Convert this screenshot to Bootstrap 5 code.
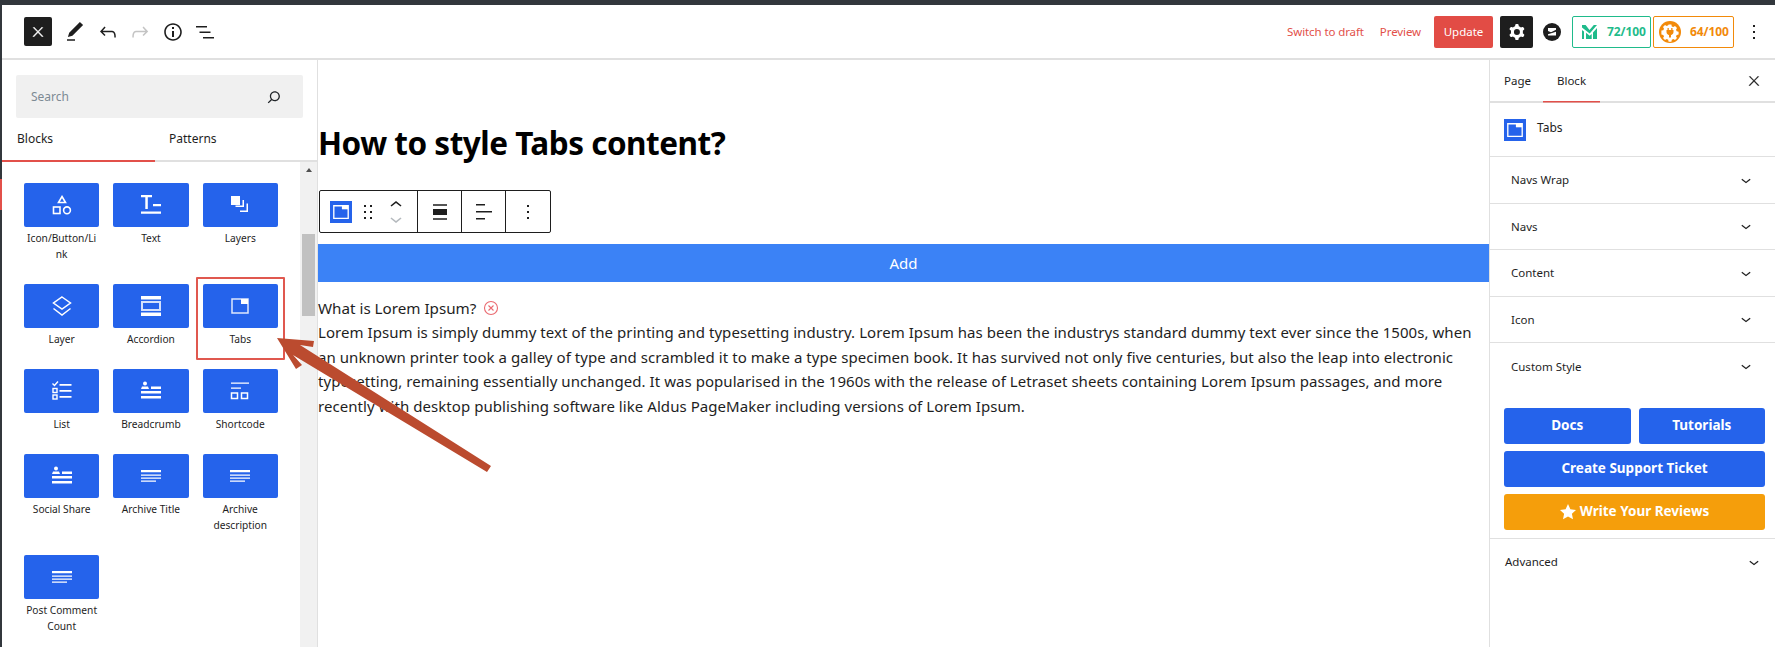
<!doctype html>
<html lang="en">

<head>
	<meta charset="utf-8">
	<meta name="viewport" content="width=device-width, initial-scale=1">
	<title>How to style Tabs content?</title>
	<link href="https://cdn.jsdelivr.net/npm/bootstrap@5.3.5/dist/css/bootstrap.min.css" rel="stylesheet"
		crossorigin="anonymous">
	<style>
		html, body { height: 647px; overflow: hidden; }
		body { font-family: "Noto Sans", "Liberation Sans", sans-serif; font-size: 13px; color: #1e1e1e; background: #fff; }
		svg { fill: currentColor; display: block; flex: none; }
		.admin-bar { height: 5px; background: #32373c; }
		.admin-side { width: 2px; flex: none; background: #32373c; position: relative; }
		.admin-current { height: 31px; margin-top: 174px; background: #e2504a; }
		.editor-shell { height: 642px; }
		.editor-main { min-width: 0; }

		.top-bar { height: 55px; flex: none; border-bottom: 2px solid #e0e0e0; padding-left: 22px; padding-right: 9px; }
		.close-box { width: 28px; height: 29px; background: #1e1e1e; color: #fff; border-radius: 2px; margin-right: 11px; }
		.tool-btn { width: 32.5px; color: #1e1e1e; }
		.tool-btn.is-off { color: #c4c4c4; }
		.link-red { color: #e2504a; font-size: 11.5px; letter-spacing: -.1px; }
		.btn-update { width: 59px; height: 32px; background: #e24c45; color: #fff; font-size: 11.5px; border-radius: 2px; margin-left: 13px; }
		.gear-box { width: 33px; height: 32px; background: #1e1e1e; color: #fff; border-radius: 2px; margin-left: 7px; }
		.round-logo { width: 18px; height: 18px; margin-left: 10px; margin-right: 11px; }
		.score-box { height: 32px; border: 1px solid; border-radius: 2px; font-weight: 700; font-size: 12px; letter-spacing: -.1px; background: #fff; }
		.score-green { width: 79px; color: #1fbb8b; border-color: #1fbb8b; padding-left: 9px; gap: 10px; }
		.score-orange { width: 81px; margin-left: 2px; color: #f28a0a; border-color: #f28a0a; padding-left: 5px; gap: 9px; }

		.side-left { width: 316px; flex: none; border-right: 1px solid #e0e0e0; }
		.search-wrap { padding: 15px 14px 0 14px; width: 301px; box-sizing: content-box; }
		.search-box { width: 287px; height: 43px; background: #f0f0f0; border-radius: 2px; padding: 0 19px 0 15px; color: #7d8a94; font-size: 12px; }
		.left-tabs { height: 44px; flex: none; border-bottom: 2px solid #e0e0e0; position: relative; }
		.left-tab { width: 153px; padding-left: 15px; padding-top: 12px; font-size: 12px; }
		.left-tab.is-on { box-shadow: 0 2px 0 #e2504a; }
		.left-tab + .left-tab { padding-left: 14px; }
		.left-body { height: 485px; }
		.block-grid { width: 298px; padding: 21px 0 0 22px; display: grid; grid-template-columns: repeat(3, 75.3px); column-gap: 14px; row-gap: 22px; align-content: start; }
		.block-item { text-align: center; font-size: 10.2px; line-height: 16px; color: #1e1e1e; overflow-wrap: anywhere; position: relative; }
		.block-tile { height: 44px; background: #2563eb; border-radius: 2px; color: #fff; margin-bottom: 3px; }
		.block-item.is-marked::after { content: ""; position: absolute; left: -7px; right: -7px; top: -7px; bottom: -13px; border: 2px solid #e0584f; border-radius: 1px; }
		.fake-scroll { width: 17px; flex: none; background: #f1f1f1; padding: 0 2px; }
		.scroll-up { width: 0; height: 0; border: 3.5px solid transparent; border-bottom: 4px solid #505050; border-top: 0; margin: 6px auto 0; }
		.scroll-thumb { height: 82px; background: #c1c1c1; margin-top: 62px; }

		.canvas-area { min-width: 0; flex: 1 1 0; }
		.post-title { font-size: 31.5px; font-weight: 700; color: #000; line-height: 40px; margin: 63px 0 27px; font-family: "Noto Sans", sans-serif; letter-spacing: -.5px; }
		.block-toolbar { width: 232px; height: 43px; border: 1.5px solid #1e1e1e; border-radius: 2px; margin-left: 1px; background: #fff; }
		.block-toolbar > div { height: 100%; }
		.bar-cell { width: 44px; border-left: 1.5px solid #1e1e1e; }
		.bar-main { width: 97px; padding-left: 10px; }
		.blue-sq { width: 22px; height: 22px; background: #2563eb; color: #fff; }
		.add-bar { height: 38px; margin-top: 11px; background: #3b82f6; color: #fff; font-size: 15px; }
		.q-line { font-size: 15.2px; line-height: 24px; margin-top: 14px; color: #1e1e1e; }
		.x-circle { color: #ea6a70; margin-left: 7px; }
		.lorem-text { font-size: 15px; line-height: 24.7px; color: #1e1e1e; margin: 0; letter-spacing: .06px; }

		.side-right { width: 286px; flex: none; border-left: 1px solid #e0e0e0; }
		.right-tabs { height: 43px; flex: none; border-bottom: 2px solid #e0e0e0; padding-left: 14px; padding-right: 13px; font-size: 11.5px; }
		.right-tab { height: 41px; line-height: 26px; padding-top: 8px; }
		.right-tab.is-on { margin-left: 12px; padding: 8px 14px 0; box-shadow: 0 1.5px 0 #e2504a; }
		.block-head { height: 54px; flex: none; border-bottom: 1px solid #e0e0e0; padding-left: 14px; gap: 11px; font-size: 12px; }
		.head-icon { width: 22px; height: 22px; background: #2563eb; color: #fff; }
		.acc-row { height: 46.5px; flex: none; border-bottom: 1px solid #e0e0e0; padding: 0 19px 0 21px; font-size: 11.5px; }
		.acc-row.no-line { border-bottom: 0; }
		.btn-stack { padding: 0 10px 8px 14px; gap: 7px; margin-top: 18px; border-bottom: 1px solid #e0e0e0; }
		.side-btn { height: 36px; color: #fff; font-weight: 700; font-size: 13.5px; border-radius: 3px; background: #2563eb; }
		.btn-half { flex: 1 1 0; }
		.side-btn.is-amber { background: #f59e0b; gap: 4px; }
		.adv-row { height: 47px; padding: 0 11px 0 15px; font-size: 11.5px; }

		.arrow-layer { position: absolute; left: 0; top: 0; pointer-events: none; }
	</style>
</head>

<body>
	<div class="admin-bar"></div>
	<div class="d-flex editor-shell">
		<div class="admin-side">
			<div class="admin-current"></div>
		</div>
		<div class="editor-main flex-grow-1 d-flex flex-column">

			<div class="top-bar d-flex align-items-center">
				<div class="close-box d-flex align-items-center justify-content-center">
					<svg width="16" height="16" viewBox="0 0 24 24"><path stroke="currentColor" stroke-width=".7" d="M13 11.8l6.1-6.3-1-1-6.1 6.2-6.1-6.2-1 1 6.1 6.3-6.5 6.7 1 1 6.5-6.6 6.5 6.6 1-1z"/></svg>
				</div>
				<div class="tool-btn"><svg width="24" height="24" viewBox="0 0 24 24"><path d="M20.1 5.1L16.9 2 6.2 12.7l-1.3 4.4 4.5-1.3L20.1 5.1zM4 20.8h8v-1.5H4v1.5z"/></svg></div>
				<div class="tool-btn"><svg width="24" height="24" viewBox="0 0 24 24"><path d="M18.3 11.7c-.6-.6-1.4-.9-2.3-.9H6.7l2.9-3.3-1.1-1-4.5 5L8.5 16l1-1-2.7-2.7H16c.5 0 .9.2 1.3.5 1 1 1 3.4 1 4.5v.3h1.5v-.2c0-1.5 0-4.3-1.5-5.700z"/></svg></div>
				<div class="tool-btn is-off"><svg width="24" height="24" viewBox="0 0 24 24"><path d="M15.6 6.5l-1.1 1 2.9 3.3H8c-.9 0-1.7.3-2.3.9-1.4 1.5-1.4 4.2-1.4 5.6v.2h1.5v-.3c0-1.1 0-3.5 1-4.5.3-.3.7-.5 1.3-.5h9.2L14.5 15l1.1 1.1 4.6-4.6-4.6-5z"/></svg></div>
				<div class="tool-btn"><svg width="24" height="24" viewBox="0 0 24 24"><path d="M12 3.2c-4.8 0-8.8 3.9-8.8 8.8 0 4.8 3.9 8.8 8.8 8.8 4.8 0 8.8-3.9 8.8-8.8 0-4.8-4-8.8-8.8-8.8zm0 16c-4 0-7.2-3.3-7.2-7.2C4.8 8 8 4.8 12 4.8s7.2 3.3 7.2 7.2c0 4-3.2 7.2-7.2 7.2zM11 17h2v-6h-2v6zm0-8h2V7h-2v2z"/></svg></div>
				<div class="tool-btn"><svg width="24" height="24" viewBox="0 0 24 24"><path d="M3 6h11v1.5H3V6zm3.5 5.5h11V13h-11v-1.5zM21 17H10v1.5h11V17z"/></svg></div>

				<div class="ms-auto d-flex align-items-center">
					<span class="link-red me-3">Switch to draft</span>
					<span class="link-red">Preview</span>
					<div class="btn-update d-flex align-items-center justify-content-center">Update</div>
					<div class="gear-box d-flex align-items-center justify-content-center">
						<svg width="24" height="24" viewBox="0 0 24 24"><path fill-rule="evenodd" d="M10.289 4.836A1 1 0 0111.275 4h1.306a1 1 0 01.987.836l.244 1.466c.787.26 1.503.679 2.108 1.218l1.393-.522a1 1 0 011.216.437l.653 1.13a1 1 0 01-.23 1.273l-1.148.944a6.025 6.025 0 010 2.435l1.149.946a1 1 0 01.23 1.272l-.653 1.13a1 1 0 01-1.216.437l-1.394-.522c-.605.54-1.32.958-2.108 1.218l-.244 1.466a1 1 0 01-.987.836h-1.306a1 1 0 01-.986-.836l-.244-1.466a5.995 5.995 0 01-2.108-1.218l-1.394.522a1 1 0 01-1.217-.436l-.653-1.131a1 1 0 01.23-1.272l1.149-.946a6.026 6.026 0 010-2.435l-1.148-.944a1 1 0 01-.23-1.272l.653-1.131a1 1 0 011.217-.437l1.393.522a5.994 5.994 0 012.108-1.218l.244-1.466zM14.929 12a3 3 0 11-6 0 3 3 0 016 0z"/></svg>
					</div>
					<svg class="round-logo" viewBox="0 0 18 18">
						<circle cx="9" cy="9" r="9" fill="#1e1e1e"/>
						<path d="M5 5h8v1.700L8 9.300 5 8zM13 8.800v3.700H5v-1.300z" fill="#fff"/>
					</svg>
					<div class="score-box score-green d-flex align-items-center">
						<svg width="15" height="15" viewBox="0 0 15 15"><path fill="#1fbb8b" d="M0 1h3.600L7.500 6 11.800 1H15L7.700 9.500 0 3.500zM0 6l2 1.500V15H0zM15 4v11h-4V8.500zM4 8.800l3.700 2.900 2-1.800V15H4z"/></svg>
						<span>72/100</span>
					</div>
					<div class="score-box score-orange d-flex align-items-center">
						<svg width="22" height="22" viewBox="0 0 22 22">
							<circle cx="11" cy="11" r="11" fill="#f28a0a"/>
							<path fill="#fff" d="M9.600 3.500h2.800l.4 1.900 1.500.7 1.700-1 2 2-1 1.700.7 1.500 1.900.4v2.800l-1.900.4-.7 1.500 1 1.700-2 2-1.700-1-1.500.7-.4 1.900H9.600l-.4-1.900-1.500-.7-1.700 1-2-2 1-1.700-.7-1.500-1.900-.4V9.600l1.900-.4.7-1.500-1-1.700 2-2 1.700 1 1.500-.7z"/>
							<path fill="#f28a0a" d="M8.500 7h1.300v2h2.400V7h1.300v2h1v2c0 1.700-1.300 2.700-2.500 3v2.500h-2V14c-1.200-.3-2.500-1.300-2.500-3V9h1z"/>
						</svg>
						<span>64/100</span>
					</div>
					<svg class="ms-2" width="24" height="24" viewBox="0 0 24 24"><path d="M13 19h-2v-2h2v2zm0-6h-2v-2h2v2zm0-6h-2V5h2v2z"/></svg>
				</div>
			</div>

			<div class="d-flex flex-grow-1 overflow-hidden">
				<div class="side-left d-flex flex-column">
					<div class="search-wrap">
						<div class="search-box d-flex align-items-center justify-content-between">
							<span>Search</span>
							<svg class="text-dark" width="20" height="20" viewBox="0 0 24 24"><path d="M13 5c-3.300 0-6 2.700-6 6 0 1.400.5 2.700 1.300 3.700l-3.800 3.800 1.100 1.100 3.800-3.800c1 .8 2.300 1.300 3.700 1.300 3.300 0 6-2.700 6-6S16.300 5 13 5zm0 1.500c2.500 0 4.500 2 4.500 4.500s-2 4.500-4.500 4.500-4.500-2-4.500-4.500 2-4.500 4.500-4.500z"/></svg>
						</div>
					</div>
					<div class="left-tabs d-flex">
						<div class="left-tab is-on">Blocks</div>
						<div class="left-tab">Patterns</div>
					</div>
					<div class="left-body d-flex">
						<div class="block-grid flex-grow-1">
							<div class="block-item">
								<div class="block-tile d-flex align-items-center justify-content-center">
									<svg width="22" height="22" viewBox="0 0 22 22"><g fill="none" stroke="#fff" stroke-width="1.600"><path d="M11 2.500l3.500 6h-7z"/><rect x="2.500" y="13" width="6.500" height="6.500"/><circle cx="16" cy="16.300" r="3.400"/></g></svg>
								</div>
								Icon/Button/Link
							</div>
							<div class="block-item">
								<div class="block-tile d-flex align-items-center justify-content-center">
									<svg width="22" height="22" viewBox="0 0 22 22"><path d="M1 1h11v2.200H7.800V15H5.300V3.200H1zM13 10h8v2.200h-8zM1 17.500h20v2.200H1z"/></svg>
								</div>
								Text
							</div>
							<div class="block-item">
								<div class="block-tile d-flex align-items-center justify-content-center">
									<svg width="22" height="22" viewBox="0 0 22 22"><path d="M2 2h9v9H2zM13.500 6H15v7H6.500v-1.500h7zM17.500 9.500H19V18h-8v-1.500h6.500z"/></svg>
								</div>
								Layers
							</div>
							<div class="block-item">
								<div class="block-tile d-flex align-items-center justify-content-center">
									<svg width="22" height="22" viewBox="0 0 22 22"><g fill="none" stroke="#fff" stroke-width="1.500"><path d="M11 2l8.500 6L11 14 2.500 8zM2.500 13.500L11 20l8.500-6.500"/></g></svg>
								</div>
								Layer
							</div>
							<div class="block-item">
								<div class="block-tile d-flex align-items-center justify-content-center">
									<svg width="22" height="22" viewBox="0 0 22 22"><path d="M1 1h20v3.500H1zM1 17.500h20V21H1z"/><path fill-rule="evenodd" opacity=".8" d="M1 6h20v10H1zm2 2v6h16V8z"/></svg>
								</div>
								Accordion
							</div>
							<div class="block-item is-marked">
								<div class="block-tile d-flex align-items-center justify-content-center">
									<svg width="20" height="20" viewBox="0 0 20 20"><path fill="none" stroke="#fff" stroke-opacity=".85" stroke-width="1.500" d="M2 3h16v14H2z"/><path d="M11 3h7v5h-7z"/></svg>
								</div>
								Tabs
							</div>
							<div class="block-item">
								<div class="block-tile d-flex align-items-center justify-content-center">
									<svg width="22" height="22" viewBox="0 0 22 22"><path d="M8.500 4h12v1.800h-12zM8.500 10h12v1.800h-12zM8.500 16h12v1.800h-12z"/><g fill="none" stroke="#fff" stroke-width="1.400"><path d="M1.500 3.500l2 2L7 1.500"/><rect x="2" y="8.500" width="4" height="4"/><rect x="2" y="15" width="4" height="4"/></g></svg>
								</div>
								List
							</div>
							<div class="block-item">
								<div class="block-tile d-flex align-items-center justify-content-center">
									<svg width="22" height="22" viewBox="0 0 22 22"><circle cx="5" cy="3.500" r="2"/><path d="M2 6.500h6l1 2.500H1zM11 6.500h10v2.500H11zM1 11h20v2.500H1zM1 16h20v2.500H1z"/></svg>
								</div>
								Breadcrumb
							</div>
							<div class="block-item">
								<div class="block-tile d-flex align-items-center justify-content-center">
									<svg width="22" height="22" viewBox="0 0 22 22"><path d="M2 2.500h18v1.300H2zM2 7.500h10v1.300H2z"/><g fill="none" stroke="#fff" stroke-width="1.500"><rect x="2.500" y="13" width="6" height="5.500"/><rect x="12.500" y="13" width="6" height="5.500"/></g></svg>
								</div>
								Shortcode
							</div>
							<div class="block-item">
								<div class="block-tile d-flex align-items-center justify-content-center">
									<svg width="22" height="22" viewBox="0 0 22 22"><circle cx="5" cy="3.500" r="2"/><path d="M2 6.500h6l1 2.500H1zM11 6.500h10v2.500H11zM1 11h20v2.500H1zM1 16h20v2.500H1z"/></svg>
								</div>
								Social Share
							</div>
							<div class="block-item">
								<div class="block-tile d-flex align-items-center justify-content-center">
									<svg width="22" height="22" viewBox="0 0 22 22"><path d="M1 5h20v2.300H1zM1 9.500h20v1.200H1zM1 12.500h20v1.200H1zM1 15.500h15v1.200H1z"/></svg>
								</div>
								Archive Title
							</div>
							<div class="block-item">
								<div class="block-tile d-flex align-items-center justify-content-center">
									<svg width="22" height="22" viewBox="0 0 22 22"><path d="M1 5h20v2.300H1zM1 9.500h20v1.200H1zM1 12.500h20v1.200H1zM1 15.500h15v1.200H1z"/></svg>
								</div>
								Archive description
							</div>
							<div class="block-item">
								<div class="block-tile d-flex align-items-center justify-content-center">
									<svg width="22" height="22" viewBox="0 0 22 22"><path d="M1 5h20v2.300H1zM1 9.500h20v1.200H1zM1 12.500h20v1.200H1zM1 15.500h15v1.200H1z"/></svg>
								</div>
								Post Comment Count
							</div>
						</div>
						<div class="fake-scroll">
							<div class="scroll-up"></div>
							<div class="scroll-thumb"></div>
						</div>
					</div>
				</div>

				<div class="canvas-area">
					<h1 class="post-title">How to style Tabs content?</h1>
					<div class="block-toolbar d-flex">
						<div class="bar-main d-flex align-items-center">
							<div class="blue-sq d-flex align-items-center justify-content-center">
								<svg width="18" height="18" viewBox="0 0 20 20"><path fill="none" stroke="#fff" stroke-width="1.500" d="M2 3h16v14H2z"/><path d="M11 3h7v4h-7z" fill="#fff"/></svg>
							</div>
							<svg class="ms-1" width="24" height="24" viewBox="0 0 24 24"><path d="M8 7h2V5H8v2zm0 6h2v-2H8v2zm0 6h2v-2H8v2zm6-14v2h2V5h-2zm0 8h2v-2h-2v2zm0 6h2v-2h-2v2z"/></svg>
							<div class="ms-1 d-flex flex-column">
								<svg width="24" height="14" viewBox="0 5 24 14"><path d="M6.500 12.400L12 8l5.500 4.400-.9 1.200L12 10l-4.500 3.600-1-1.200z"/></svg>
								<svg class="text-secondary opacity-50" width="24" height="14" viewBox="0 5 24 14"><path d="M17.500 11.600L12 16l-5.500-4.400.9-1.200L12 14l4.500-3.600 1 1.200z"/></svg>
							</div>
						</div>
						<div class="bar-cell d-flex align-items-center justify-content-center">
							<svg width="24" height="24" viewBox="0 0 24 24"><path d="M5 15h14V9H5v6zm0 4.800h14v-1.500H5v1.500zM5 4.200v1.500h14V4.200H5z"/></svg>
						</div>
						<div class="bar-cell d-flex align-items-center justify-content-center">
							<svg width="24" height="24" viewBox="0 0 24 24"><path d="M13 5.500H4V4h9v1.500zm7 7H4V11h16v1.500zm-7 7H4V18h9v1.500z"/></svg>
						</div>
						<div class="bar-cell flex-grow-1 d-flex align-items-center justify-content-center">
							<svg width="24" height="24" viewBox="0 0 24 24"><path d="M13 19h-2v-2h2v2zm0-6h-2v-2h2v2zm0-6h-2V5h2v2z"/></svg>
						</div>
					</div>
					<div class="add-bar d-flex align-items-center justify-content-center">Add</div>
					<div class="q-line d-flex align-items-center">
						<span>What is Lorem Ipsum?</span>
						<svg class="x-circle" width="16" height="16" viewBox="0 0 16 16"><g fill="none" stroke="currentColor" stroke-width="1.100"><circle cx="8" cy="8" r="6.500"/><path d="M5.500 5.500l5 5M10.500 5.500l-5 5"/></g></svg>
					</div>
					<p class="lorem-text">Lorem Ipsum is simply dummy text of the printing and typesetting industry. Lorem Ipsum has been the industrys standard dummy text ever since the 1500s, when an unknown printer took a galley of type and scrambled it to make a type specimen book. It has survived not only five centuries, but also the leap into electronic typesetting, remaining essentially unchanged. It was popularised in the 1960s with the release of Letraset sheets containing Lorem Ipsum passages, and more recently with desktop publishing software like Aldus PageMaker including versions of Lorem Ipsum.</p>
				</div>

				<div class="side-right d-flex flex-column">
					<div class="right-tabs d-flex align-items-center">
						<span class="right-tab">Page</span>
						<span class="right-tab is-on">Block</span>
						<svg class="ms-auto" width="16" height="16" viewBox="0 0 24 24"><path stroke="currentColor" stroke-width=".4" d="M13 11.800l6.100-6.300-1-1-6.100 6.200-6.100-6.200-1 1 6.100 6.300-6.500 6.700 1 1 6.500-6.600 6.500 6.600 1-1z"/></svg>
					</div>
					<div class="block-head d-flex align-items-center">
						<div class="head-icon d-flex align-items-center justify-content-center">
							<svg width="18" height="18" viewBox="0 0 20 20"><path fill="none" stroke="#fff" stroke-width="1.500" d="M2 3h16v14H2z"/><path d="M11 3h7v4h-7z" fill="#fff"/></svg>
						</div>
						<span class="mb-1">Tabs</span>
					</div>
					<div class="acc-row d-flex align-items-center justify-content-between"><span>Navs Wrap</span><svg width="20" height="20" viewBox="0 0 24 24"><path d="M17.500 11.600L12 16l-5.500-4.400.9-1.200L12 14l4.500-3.600 1 1.200z"/></svg></div>
					<div class="acc-row d-flex align-items-center justify-content-between"><span>Navs</span><svg width="20" height="20" viewBox="0 0 24 24"><path d="M17.500 11.600L12 16l-5.500-4.400.9-1.200L12 14l4.500-3.600 1 1.200z"/></svg></div>
					<div class="acc-row d-flex align-items-center justify-content-between"><span>Content</span><svg width="20" height="20" viewBox="0 0 24 24"><path d="M17.500 11.600L12 16l-5.500-4.400.9-1.200L12 14l4.500-3.600 1 1.200z"/></svg></div>
					<div class="acc-row d-flex align-items-center justify-content-between"><span>Icon</span><svg width="20" height="20" viewBox="0 0 24 24"><path d="M17.500 11.600L12 16l-5.500-4.400.9-1.200L12 14l4.500-3.600 1 1.200z"/></svg></div>
					<div class="acc-row no-line d-flex align-items-center justify-content-between"><span>Custom Style</span><svg width="20" height="20" viewBox="0 0 24 24"><path d="M17.500 11.600L12 16l-5.500-4.400.9-1.200L12 14l4.500-3.600 1 1.200z"/></svg></div>
					<div class="btn-stack d-flex flex-column">
						<div class="d-flex gap-2">
							<div class="side-btn btn-half d-flex align-items-center justify-content-center">Docs</div>
							<div class="side-btn btn-half d-flex align-items-center justify-content-center">Tutorials</div>
						</div>
						<div class="side-btn d-flex align-items-center justify-content-center">Create Support Ticket</div>
						<div class="side-btn is-amber d-flex align-items-center justify-content-center">
							<svg width="16" height="16" viewBox="0 0 16 16"><path d="M8 0l2.400 5.200 5.600.7-4.100 3.800 1.100 5.600L8 12.500l-5 2.800 1.100-5.600L0 5.900l5.600-.7z"/></svg>
							<span>Write Your Reviews</span>
						</div>
					</div>
					<div class="adv-row d-flex align-items-center justify-content-between"><span>Advanced</span><svg width="20" height="20" viewBox="0 0 24 24"><path d="M17.500 11.600L12 16l-5.500-4.400.9-1.200L12 14l4.500-3.600 1 1.200z"/></svg></div>
				</div>
			</div>
		</div>
	</div>

	<svg class="arrow-layer" width="1775" height="647" viewBox="0 0 1775 647">
		<polygon fill="#bb4b2f" points="277,338 314,341 313,347 300,345 491,466 487,472 293,355 302,365 296,369"/>
	</svg>

	<script src="https://cdn.jsdelivr.net/npm/bootstrap@5.3.5/dist/js/bootstrap.bundle.min.js"
		crossorigin="anonymous"></script>
</body>

</html>
